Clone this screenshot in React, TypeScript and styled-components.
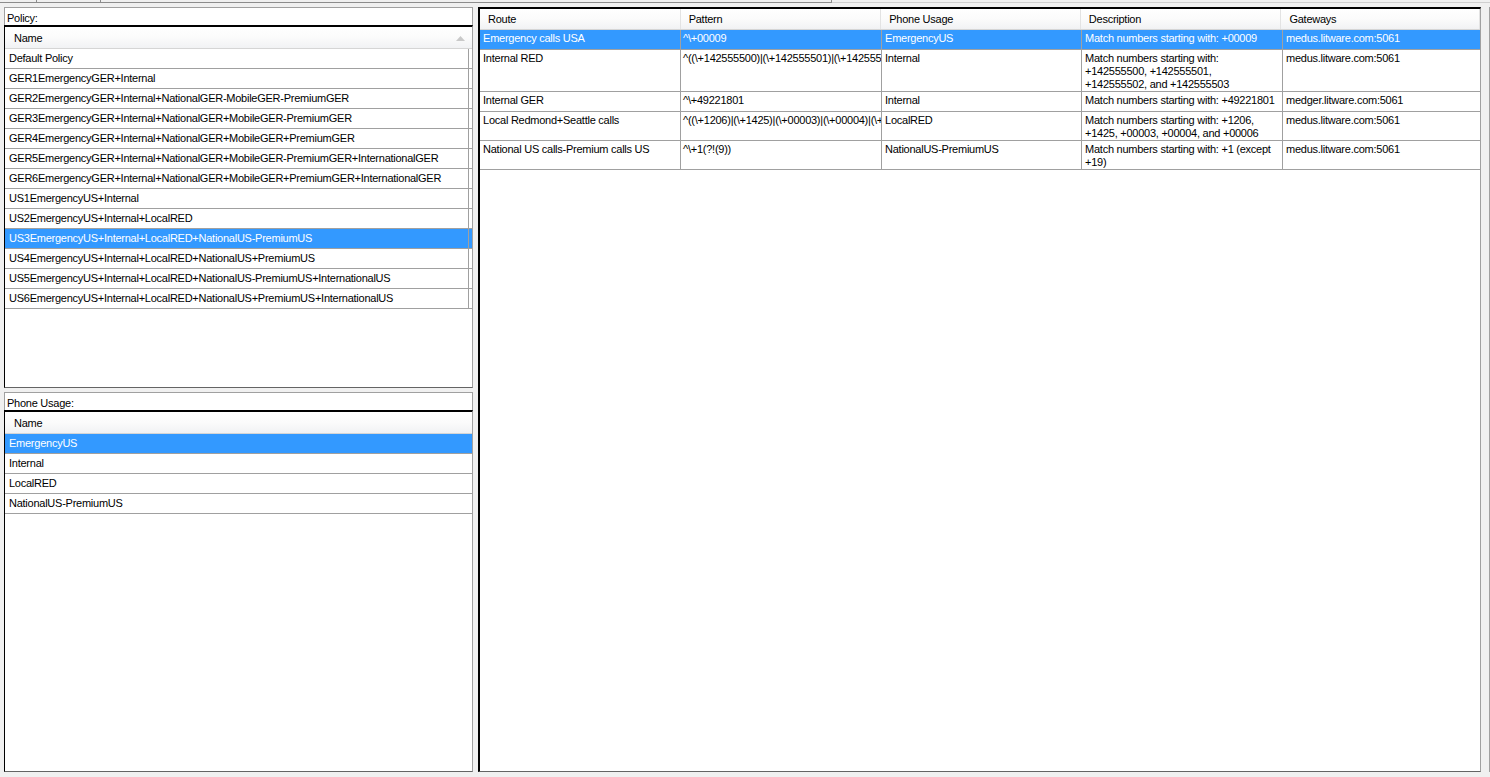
import styled, { createGlobalStyle } from 'styled-components'

const GlobalStyle = createGlobalStyle`
  html, body {
    margin: 0;
    padding: 0;
    background: #f0f0f0;
  }
  body {
    font-family: "Liberation Sans", Arial, sans-serif;
    font-size: 11px;
    letter-spacing: -0.25px;
    color: #000;
  }
`

const Page = styled.div`
  width: 1490px;
  height: 777px;
  display: flex;
  flex-direction: column;
  overflow: hidden;
  background: #f0f0f0;
`

const TabStrip = styled.div`
  height: 7px;
  flex-shrink: 0;
  display: flex;
  align-items: flex-start;
`

const TabStub = styled.div<{ $w?: number; $faint?: boolean }>`
  height: 2px;
  ${p => (p.$w ? `width: ${p.$w}px;` : 'flex: 1;')}
  border-bottom: 1px solid ${p => (p.$faint ? '#cfcfcf' : '#8c8c8c')};
  border-right: ${p => (p.$faint ? 'none' : '1px solid #8c8c8c')};
`

const Main = styled.div`
  height: 765px;
  display: flex;
  padding-left: 4px;
  gap: 5px;
`

const LeftColumn = styled.div`
  width: 470px;
  display: flex;
  flex-direction: column;
  gap: 4px;
`

const GroupPanel = styled.div<{ $h: number }>`
  height: ${p => p.$h}px;
  box-sizing: border-box;
  border: 1px solid #a0a0a0;
  border-bottom: none;
  background: #fff;
  display: flex;
  flex-direction: column;
`

const GroupLabel = styled.div`
  height: 17px;
  box-sizing: border-box;
  padding: 4px 0 0 2px;
  line-height: 13px;
  flex-shrink: 0;
`

const ListView = styled.div`
  flex: 1;
  margin: 0 -1px 0 -1px;
  border-top: 2px solid #000;
  border-left: 1px solid #000;
  border-right: 1px solid #a0a0a0;
  border-bottom: 1px solid #646464;
  background: #fff;
  overflow: hidden;
`

const ListHeader = styled.div`
  height: 22px;
  box-sizing: border-box;
  display: flex;
  align-items: center;
  padding-left: 9px;
  background: linear-gradient(#ffffff 0%, #fbfbfb 50%, #f1f2f4 100%);
  border-bottom: 1px solid #d5d5d5;
`

const HeaderText = styled.span`
  flex: 1;
`

const SortArrow = styled.svg`
  width: 9px;
  height: 5px;
  margin-right: 7px;
  margin-top: 1px;
`

const ListRow = styled.div<{ $selected?: boolean }>`
  height: 20px;
  box-sizing: border-box;
  display: flex;
  border-bottom: 1px solid #a0a0a0;
  background: ${p => (p.$selected ? '#3399ff' : '#fff')};
  color: ${p => (p.$selected ? '#fff' : '#000')};
`

const ListCell = styled.div<{ $divider?: boolean }>`
  width: 464px;
  box-sizing: border-box;
  padding: 0 0 2px 4px;
  display: flex;
  align-items: center;
  white-space: nowrap;
  overflow: hidden;
  border-right: ${p => (p.$divider ? '1px solid #a0a0a0' : 'none')};
`

const GridPanel = styled.div`
  width: 1005px;
  box-sizing: border-box;
  border-top: 2px solid #000;
  border-left: 2px solid #000;
  border-right: 1px solid #a0a0a0;
  border-bottom: 1px solid #646464;
  background: #fff;
  overflow: hidden;
`

const GridHeader = styled.div`
  height: 21px;
  box-sizing: border-box;
  display: flex;
  background: linear-gradient(#ffffff 0%, #fbfbfb 50%, #f1f2f4 100%);
  border-bottom: 1px solid #d5d5d5;
`

const GridHeaderCell = styled.div<{ $w: number }>`
  width: ${p => p.$w}px;
  box-sizing: border-box;
  padding-left: 8px;
  display: flex;
  align-items: center;
  border-right: 1px solid #e3e3e3;
  white-space: nowrap;
`

const GridRow = styled.div<{ $selected?: boolean }>`
  display: flex;
  min-height: 20px;
  box-sizing: border-box;
  border-bottom: 1px solid #a0a0a0;
  background: ${p => (p.$selected ? '#3399ff' : '#fff')};
  color: ${p => (p.$selected ? '#fff' : '#000')};
`

const GridCell = styled.div<{ $w: number; $clip?: boolean; $last?: boolean }>`
  width: ${p => p.$w}px;
  flex-shrink: 0;
  box-sizing: border-box;
  padding: 2px 2px 0 ${p => (p.$clip ? 2 : 3)}px;
  line-height: 13px;
  border-right: ${p => (p.$last ? 'none' : '1px solid #a0a0a0')};
  white-space: ${p => (p.$clip ? 'nowrap' : 'normal')};
  overflow: hidden;
`

const RightEdge = styled.div`
  width: 3px;
  border-right: 1px solid #a0a0a0;
`

const policies = [
  'Default Policy',
  'GER1EmergencyGER+Internal',
  'GER2EmergencyGER+Internal+NationalGER-MobileGER-PremiumGER',
  'GER3EmergencyGER+Internal+NationalGER+MobileGER-PremiumGER',
  'GER4EmergencyGER+Internal+NationalGER+MobileGER+PremiumGER',
  'GER5EmergencyGER+Internal+NationalGER+MobileGER-PremiumGER+InternationalGER',
  'GER6EmergencyGER+Internal+NationalGER+MobileGER+PremiumGER+InternationalGER',
  'US1EmergencyUS+Internal',
  'US2EmergencyUS+Internal+LocalRED',
  'US3EmergencyUS+Internal+LocalRED+NationalUS-PremiumUS',
  'US4EmergencyUS+Internal+LocalRED+NationalUS+PremiumUS',
  'US5EmergencyUS+Internal+LocalRED+NationalUS-PremiumUS+InternationalUS',
  'US6EmergencyUS+Internal+LocalRED+NationalUS+PremiumUS+InternationalUS',
]

const usages = ['EmergencyUS', 'Internal', 'LocalRED', 'NationalUS-PremiumUS']

const columns = [
  { title: 'Route', w: 201 },
  { title: 'Pattern', w: 201 },
  { title: 'Phone Usage', w: 200 },
  { title: 'Description', w: 201 },
  { title: 'Gateways', w: 199 },
]

// non-breaking spaces keep the wrap points of the original grid
const routes = [
  ['Emergency calls USA', '^\\+00009', 'EmergencyUS', 'Match numbers starting with: +00009', 'medus.litware.com:5061'],
  [
    'Internal RED',
    '^((\\+142555500)|(\\+142555501)|(\\+142555502)|(\\+142555503))',
    'Internal',
    'Match numbers starting with: +142555500, +142555501, +142555502,\u00a0and\u00a0+142555503',
    'medus.litware.com:5061',
  ],
  ['Internal GER', '^\\+49221801', 'Internal', 'Match numbers starting with: +49221801', 'medger.litware.com:5061'],
  [
    'Local Redmond+Seattle calls',
    '^((\\+1206)|(\\+1425)|(\\+00003)|(\\+00004)|(\\+00006))',
    'LocalRED',
    'Match numbers starting with: +1206, +1425, +00003, +00004, and +00006',
    'medus.litware.com:5061',
  ],
  ['National US calls-Premium calls US', '^\\+1(?!(9))', 'NationalUS-PremiumUS', 'Match numbers starting with: +1 (except +19)', 'medus.litware.com:5061'],
]

const App = () => {
  return (
    <Page>
      <GlobalStyle />
      <TabStrip>
        <TabStub $w={36} />
        <TabStub $w={63} />
        <TabStub $w={730} />
        <TabStub $faint />
      </TabStrip>
      <Main>
        <LeftColumn>
          <GroupPanel $h={381}>
            <GroupLabel>Policy:</GroupLabel>
            <ListView>
              <ListHeader>
                <HeaderText>Name</HeaderText>
                <SortArrow viewBox="0 0 9 5">
                  <polygon points="0,5 4.5,0 9,5" fill="#c9c9c9" />
                </SortArrow>
              </ListHeader>
              {policies.map((name, i) => (
                <ListRow key={name} $selected={i === 9}>
                  <ListCell $divider>{name}</ListCell>
                </ListRow>
              ))}
            </ListView>
          </GroupPanel>
          <GroupPanel $h={380}>
            <GroupLabel>Phone Usage:</GroupLabel>
            <ListView>
              <ListHeader>
                <HeaderText>Name</HeaderText>
              </ListHeader>
              {usages.map((name, i) => (
                <ListRow key={name} $selected={i === 0}>
                  <ListCell>{name}</ListCell>
                </ListRow>
              ))}
            </ListView>
          </GroupPanel>
        </LeftColumn>
        <GridPanel>
          <GridHeader>
            {columns.map(c => (
              <GridHeaderCell key={c.title} $w={c.w}>
                {c.title}
              </GridHeaderCell>
            ))}
          </GridHeader>
          {routes.map((r, i) => (
            <GridRow key={r[0]} $selected={i === 0}>
              {r.map((text, j) => (
                <GridCell key={j} $w={columns[j].w} $clip={j === 1} $last={j === 4}>
                  {text}
                </GridCell>
              ))}
            </GridRow>
          ))}
        </GridPanel>
        <RightEdge />
      </Main>
    </Page>
  )
}

export default App
